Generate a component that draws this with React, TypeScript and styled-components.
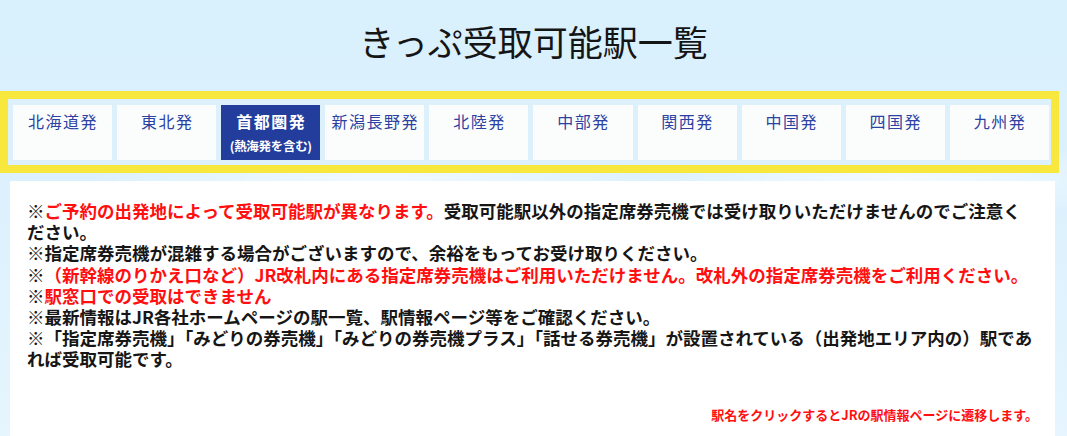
import styled, { createGlobalStyle } from "styled-components";

const GlobalStyle = createGlobalStyle`
    html, body {
        margin: 0;
        padding: 0;
    }

    body {
        font-family: "Noto Sans CJK JP", "Noto Sans", sans-serif;
        color: #1a1a1a;
    }
`;

type Area = {
    name: string;
    note?: string;
};

const areas: Array<Area> = [
    {name: "北海道発"},
    {name: "東北発"},
    {name: "首都圏発", note: "(熱海発を含む)"},
    {name: "新潟長野発"},
    {name: "北陸発"},
    {name: "中部発"},
    {name: "関西発"},
    {name: "中国発"},
    {name: "四国発"},
    {name: "九州発"},
];

export default function App() {
    const selected = 2;

    return <Page>
        <GlobalStyle/>
        <Title>きっぷ受取可能駅一覧</Title>

        <TabFrame>
            {areas.map((area, index) => (
                <Tab key={area.name} active={index === selected}>
                    <TabName active={index === selected}>{area.name}</TabName>
                    {area.note && <TabNote>{area.note}</TabNote>}
                </Tab>
            ))}
        </TabFrame>

        <Panel>
            <Line>
                ※<Red>ご予約の出発地によって受取可能駅が異なります。</Red>受取可能駅以外の指定席券売機では受け取りいただけませんのでご注意ください。
            </Line>
            <Line>※指定席券売機が混雑する場合がございますので、余裕をもってお受け取りください。</Line>
            <Line>※<Red>（新幹線のりかえ口など）JR改札内にある指定席券売機はご利用いただけません。改札外の指定席券売機をご利用ください。</Red></Line>
            <Line>※<Red>駅窓口での受取はできません</Red></Line>
            <Line>※最新情報はJR各社ホームページの駅一覧、駅情報ページ等をご確認ください。</Line>
            <Line>※「指定席券売機」「みどりの券売機」「みどりの券売機プラス」「話せる券売機」が設置されている（出発地エリア内の）駅であれば受取可能です。</Line>

            <LinkHint>駅名をクリックするとJRの駅情報ページに遷移します。</LinkHint>
        </Panel>
    </Page>
}

const Page = styled.div`
    min-height: 436px;
    overflow: hidden;
    background: radial-gradient(ellipse 260px 40px at 900px 180px, rgba(255, 255, 255, 0.7), transparent),
    radial-gradient(ellipse 300px 50px at 380px 178px, rgba(255, 255, 255, 0.6), transparent),
    linear-gradient(180deg, #d9f0fd 0%, #dcf1fd 45%, #e6f5fe 100%);
`;

const Title = styled.h1`
    margin: 0;
    height: 91px;
    padding-bottom: 10px;
    box-sizing: border-box;
    display: flex;
    align-items: center;
    justify-content: center;
    font-size: 35px;
    font-weight: 400;
    color: #151515;
`;

const TabFrame = styled.nav`
    width: 1059px;
    box-sizing: border-box;
    display: flex;
    gap: 5px;
    padding: 6px 2px 5px 5px;
    border: 8px solid #f8e73c;
    background: #dcf1fb;
`;

const Tab = styled.div<{ active: boolean }>`
    flex: 1;
    height: 55px;
    padding-top: 4px;
    box-sizing: border-box;
    display: flex;
    flex-direction: column;
    align-items: center;
    background: ${(props) => props.active ? '#233d9c' : '#fbfdfd'};
    color: ${(props) => props.active ? '#ffffff' : '#2c42a2'};
    cursor: pointer;
`;

const TabName = styled.span<{ active: boolean }>`
    padding-left: 1px;
    font-size: 16px;
    font-weight: ${(props) => props.active ? 700 : 400};
    letter-spacing: 1.5px;
    line-height: 24px;
`;

const TabNote = styled.span`
    margin-top: 4px;
    font-size: 12.5px;
    font-weight: 700;
    line-height: 18px;
    letter-spacing: -0.3px;
`;

const Panel = styled.section`
    margin: 8px 0 0 10px;
    width: 1045px;
    min-height: 260px;
    box-sizing: border-box;
    padding: 19px 17px 0 17px;
    background: #ffffff;
`;

const Line = styled.p`
    margin: 0;
    font-size: 17.5px;
    font-weight: 700;
    line-height: 21.2px;
    color: #161616;
`;

const Red = styled.span`
    color: #ff0f0f;
`;

const LinkHint = styled.p`
    margin: 35px 0 0;
    text-align: right;
    font-size: 13px;
    font-weight: 700;
    line-height: 20px;
    color: #ff0f0f;
`;
